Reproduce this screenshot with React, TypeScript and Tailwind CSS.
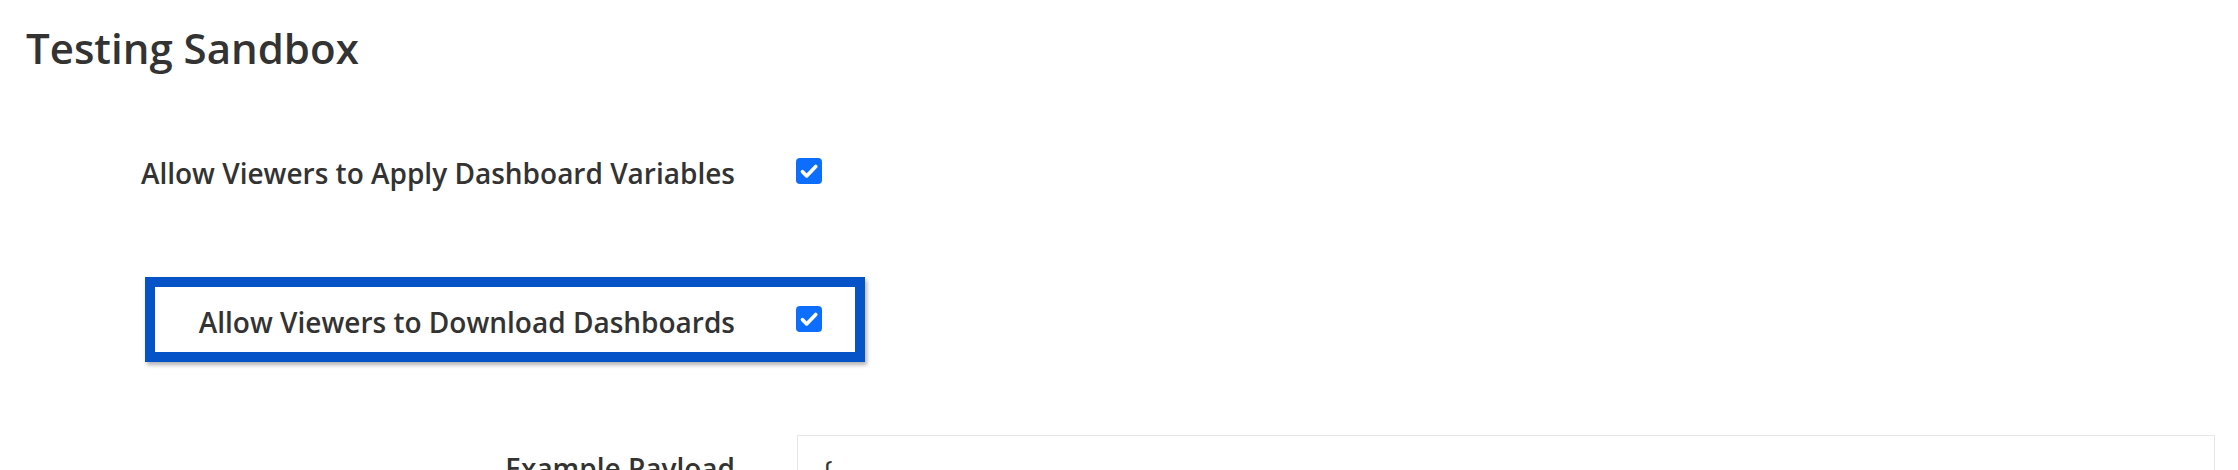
import React from "react";

function Check() {
  return (
    <span className="flex h-[26px] w-[26px] shrink-0 items-center justify-center rounded-[4px] bg-[#0d6efd]">
      <svg width="26" height="26" viewBox="0 0 20 20" fill="none">
        <path d="M5 10.5l3.2 3.3l7-7.3" stroke="#fff" strokeWidth="2.8" strokeLinecap="round" strokeLinejoin="round" />
      </svg>
    </span>
  );
}

export default function App() {
  return (
    <div className="h-[470px] w-[2238px] overflow-hidden bg-white font-['Open_Sans',sans-serif] text-[#333]">
      <h1 className="pl-[26px] pt-[27px] text-[42px] font-semibold leading-[42px]">Testing Sandbox</h1>

      {/* first option */}
      <div className="mt-[89px] flex items-start">
        <label className="mt-[1px] w-[735px] text-right text-[28px] font-semibold leading-[28px]">
          Allow Viewers to Apply Dashboard Variables
        </label>
        <div className="ml-[61px]">
          <Check />
        </div>
      </div>

      {/* highlighted option */}
      <div className="ml-[145px] mt-[90px] h-[85px] w-[720px] border-[10px] border-[#0553c6] shadow-[2px_3px_4px_rgba(0,0,0,0.3)]">
        <div className="flex items-start pt-[19px]">
          <label className="mt-[2px] w-[580px] text-right text-[28px] font-semibold leading-[28px]">
            Allow Viewers to Download Dashboards
          </label>
          <div className="ml-[61px]">
            <Check />
          </div>
        </div>
      </div>

      {/* payload */}
      <div className="mt-[73px] flex items-start">
        <label className="mt-[19px] w-[735px] text-right text-[28px] font-semibold leading-[28px]">
          Example Payload
        </label>
        <div className="ml-[62px] h-[200px] w-[1418px] border border-[#e6e6e6] pl-[24px] pt-[20px] text-[28px] leading-[28px]">
          {"{"}
        </div>
      </div>
    </div>
  );
}
